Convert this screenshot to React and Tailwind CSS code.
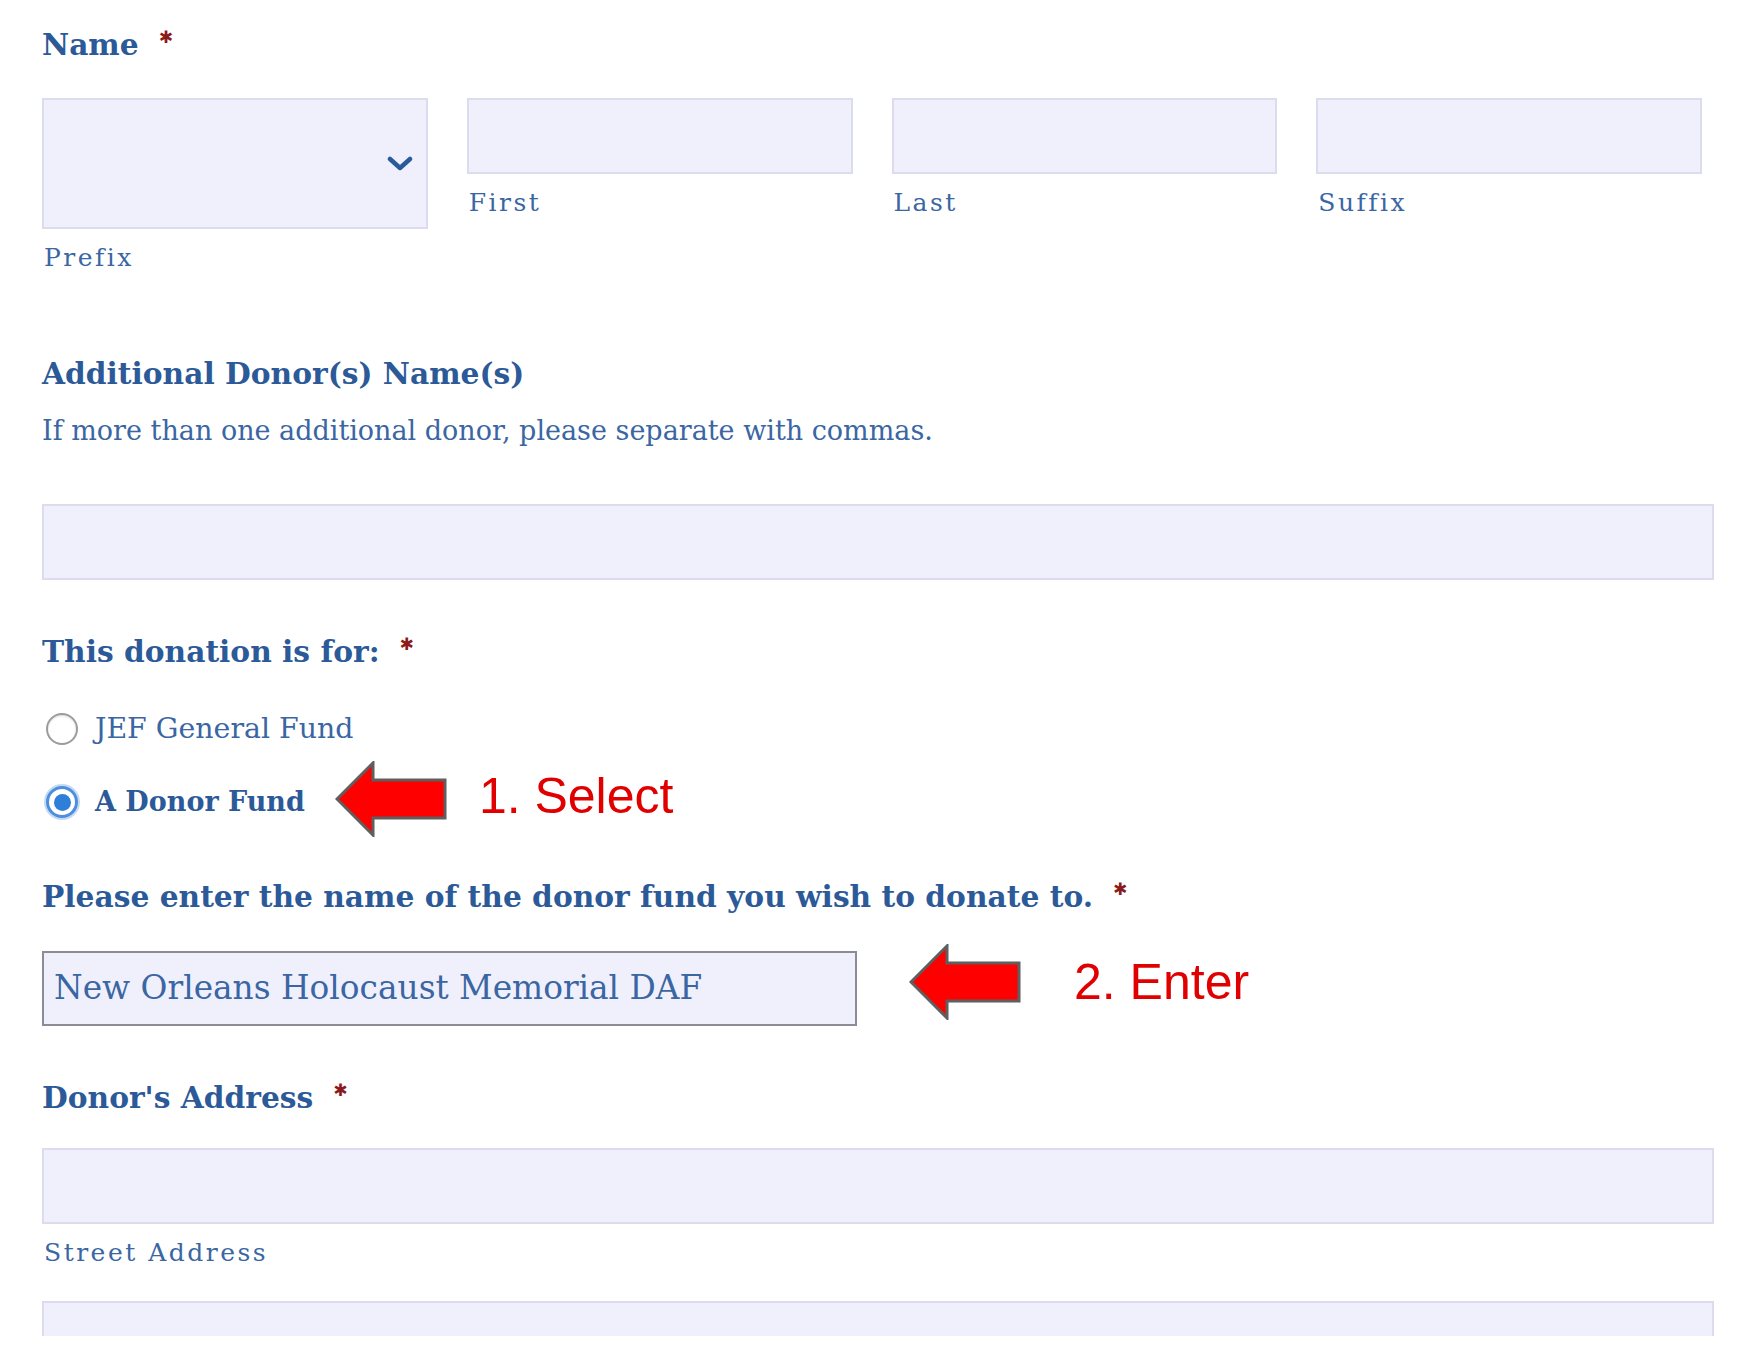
import React from 'react';

const labelCls = "font-bold text-[29.7px] text-[#2c5a98] leading-[50px] h-[50px] whitespace-nowrap";
const subCls = "text-[25px] tracking-[2.5px] text-[#3a66a3] leading-[58px] h-[58px] pl-[2px]";
const fieldCls = "bg-[#f0f0fd] border-2 border-[#dcdcee]";

const Req = () => (
  <span className="relative top-[-8px] ml-[20px] font-['DejaVu_Sans',sans-serif] text-[17px] leading-none text-[#8b1a1a]">✱</span>
);

const Arrow = () => (
  <svg width="112" height="76" viewBox="0 0 112 76" className="shrink-0">
    <polygon
      points="2,38 38,2 38,19 110,19 110,57 38,57 38,74"
      fill="#ff0000"
      stroke="#5f5f5f"
      strokeWidth="3"
      strokeLinejoin="miter"
    />
  </svg>
);

const Chevron = () => (
  <svg width="26" height="16" viewBox="0 0 26 16">
    <polyline points="3,3 13,12 23,3" fill="none" stroke="#2c5a98" strokeWidth="4.5" strokeLinecap="round" strokeLinejoin="round" />
  </svg>
);

const Radio = ({ checked }) =>
  checked ? (
    <span className="w-[32px] h-[32px] rounded-full border-[3px] border-[#4d8fde] bg-white ring-2 ring-[#c4daf4] flex items-center justify-center shrink-0">
      <span className="w-[17px] h-[17px] rounded-full bg-[#2f7ed8]" />
    </span>
  ) : (
    <span className="w-[32px] h-[32px] rounded-full border-2 border-[#9c9c9c] bg-white shadow-[inset_0_1px_2px_rgba(0,0,0,0.15)] shrink-0" />
  );

export default function App() {
  return (
    <div className="bg-white min-h-[1370px] h-[1370px] overflow-hidden pl-[42px] pr-[36px] font-['DejaVu_Serif',serif]">
      {/* Name */}
      <div className="flex items-center h-[90px]">
        <span className="font-bold text-[29.7px] text-[#2c5a98]">Name</span>
        <Req />
      </div>
      <div className="grid grid-cols-4 gap-[39px] w-[1660px] mt-[8px]">
        <div className="flex flex-col">
          <div className={`${fieldCls} h-[131px] flex items-center justify-end pr-[13px]`}>
            <Chevron />
          </div>
          <div className={subCls}>Prefix</div>
        </div>
        <div className="flex flex-col">
          <div className={`${fieldCls} h-[76px]`} />
          <div className={subCls}>First</div>
        </div>
        <div className="flex flex-col">
          <div className={`${fieldCls} h-[76px]`} />
          <div className={subCls}>Last</div>
        </div>
        <div className="flex flex-col">
          <div className={`${fieldCls} h-[76px]`} />
          <div className={subCls}>Suffix</div>
        </div>
      </div>

      {/* Additional donors */}
      <div className={`${labelCls} mt-[62px]`}>Additional Donor(s) Name(s)</div>
      <div className="text-[27px] text-[#3a66a3] leading-[64px] h-[64px] whitespace-nowrap">
        If more than one additional donor, please separate with commas.
      </div>
      <div className={`${fieldCls} h-[76px] mt-[41px]`} />

      {/* Donation for */}
      <div className={`${labelCls} mt-[47px] flex items-center`}>
        <span>This donation is for:</span>
        <Req />
      </div>
      <div className="flex items-center h-[60px] mt-[22px] pl-[4px]">
        <Radio />
        <span className="ml-[17px] text-[28.4px] text-[#3a66a3]">JEF General Fund</span>
      </div>
      <div className="flex items-center h-[60px] mt-[13px] pl-[4px]">
        <Radio checked />
        <span className="ml-[17px] text-[27px] font-bold text-[#2c5a98]">A Donor Fund</span>
        <span className="ml-[30px] mb-[6px] flex">
          <Arrow />
        </span>
        <span className="ml-[32px] mb-[12px] font-['Liberation_Sans',Arial,sans-serif] text-[50px] text-[#e00000] leading-none">
          1. Select
        </span>
      </div>

      {/* Donor fund name */}
      <div className={`${labelCls} mt-[40px] flex items-center`}>
        <span>Please enter the name of the donor fund you wish to donate to.</span>
        <Req />
      </div>
      <div className="flex items-start mt-[29px]">
        <div className="w-[815px] h-[75px] bg-[#f0f0fd] border-2 border-[#8c8c98] flex items-center pl-[10px] text-[32.8px] text-[#3a66a3] whitespace-nowrap">
          New Orleans Holocaust Memorial DAF
        </div>
        <span className="ml-[52px] -mt-[7px] flex">
          <Arrow />
        </span>
        <span className="ml-[53px] mt-[1px] font-['Liberation_Sans',Arial,sans-serif] text-[50px] text-[#e00000] leading-[60px]">
          2. Enter
        </span>
      </div>

      {/* Address */}
      <div className={`${labelCls} mt-[47px] flex items-center`}>
        <span>Donor's Address</span>
        <Req />
      </div>
      <div className={`${fieldCls} h-[76px] mt-[25px]`} />
      <div className={subCls}>Street Address</div>
      <div className="h-[35px] mt-[19px] bg-[#f0f0fd] border-2 border-b-0 border-[#dcdcee]" />
    </div>
  );
}
